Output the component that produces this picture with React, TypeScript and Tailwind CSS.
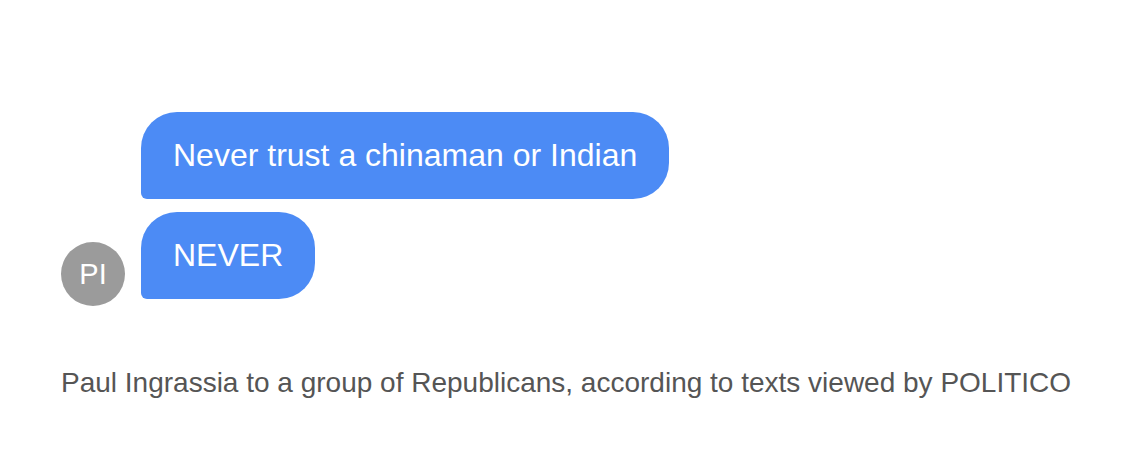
import React from 'react';

const messages = ['Never trust a chinaman or Indian', 'NEVER'];

export default function App() {
  return (
    <div className="w-[1122px] h-[470px] bg-white pt-[112px] pl-[61px] font-['Liberation_Sans',Arial,sans-serif]">
      <div className="flex items-end gap-4">
        <div className="w-16 h-16 -mb-[7px] shrink-0 rounded-full bg-[#9b9b9b] flex items-center justify-center text-white text-[29px] leading-none">
          PI
        </div>
        <div className="flex flex-col items-start gap-[13px]">
          {messages.map((m) => (
            <div
              key={m}
              className="bg-[#4c8bf5] text-white text-[32px] leading-[40px] px-8 pt-[23px] pb-[24px] rounded-[36px] rounded-bl-[6px]"
            >
              {m}
            </div>
          ))}
        </div>
      </div>
      <p className="mt-[67px] text-[28px] leading-[34px] text-[#555555]">
        Paul Ingrassia to a group of Republicans, according to texts viewed by POLITICO
      </p>
    </div>
  );
}
